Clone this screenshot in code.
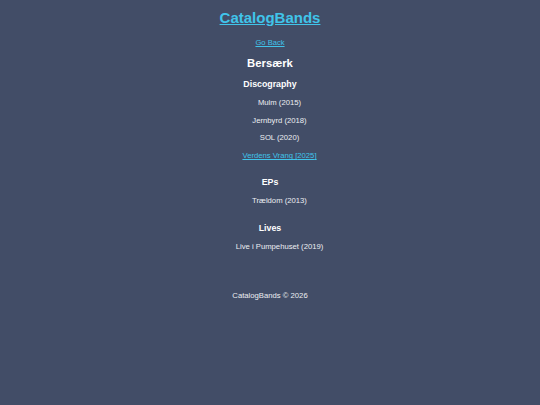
import React from "react";

// ─── Data ─────────────────────────────────────────────────────────────────────
interface Release {
  title: string;
  year: number;
  href?: string;
}

interface Section {
  heading: string;
  releases: Release[];
}

const sections: Section[] = [
  {
    heading: "Discography",
    releases: [
      { title: "Mulm", year: 2015 },
      { title: "Jernbyrd", year: 2018 },
      { title: "SOL", year: 2020 },
      { title: "Verdens Vrang", year: 2025, href: "#" },
    ],
  },
  {
    heading: "EPs",
    releases: [{ title: "Trældom", year: 2013 }],
  },
  {
    heading: "Lives",
    releases: [{ title: "Live i Pumpehuset", year: 2019 }],
  },
];

// ─── Component ────────────────────────────────────────────────────────────────
export default function App() {
  return (
    <div className="min-h-screen bg-[#424d67] text-center text-white font-['Liberation_Sans',Arial,sans-serif]">
      <header className="pt-[9px]">
        <h1 className="text-[15px] leading-[18px] font-bold">
          <a href="#" className="text-[#40c4ea] underline">
            CatalogBands
          </a>
        </h1>
      </header>

      <main>
        <a
          href="#"
          className="mt-[10.5px] block text-[7.6px] leading-[9px] text-[#40c4ea] underline"
        >
          Go Back
        </a>

        <h2 className="mt-[10px] text-[11.3px] leading-[13px] font-bold">
          Bersærk
        </h2>

        {sections.map((section, i) => (
          <section key={section.heading}>
            <h3
              className={
                i === 0
                  ? "mt-[9.5px] text-[8.8px] leading-[10px] font-bold"
                  : "mt-[12.5px] text-[8.8px] leading-[10px] font-bold"
              }
            >
              {section.heading}
            </h3>
            <ul className="mt-[5px] pl-[19px] text-[7.7px] leading-[17.7px] text-[#eceef2]">
              {section.releases.map((r) =>
                r.href ? (
                  <li key={r.title}>
                    <a href={r.href} className="text-[#40c4ea] underline">
                      {r.title} [{r.year}]
                    </a>
                  </li>
                ) : (
                  <li key={r.title}>
                    {r.title} ({r.year})
                  </li>
                ),
              )}
            </ul>
          </section>
        ))}
      </main>

      <footer className="mt-[35.5px] text-[7.7px] leading-[9px] text-[#eceef2]">
        CatalogBands © 2026
      </footer>
    </div>
  );
}
